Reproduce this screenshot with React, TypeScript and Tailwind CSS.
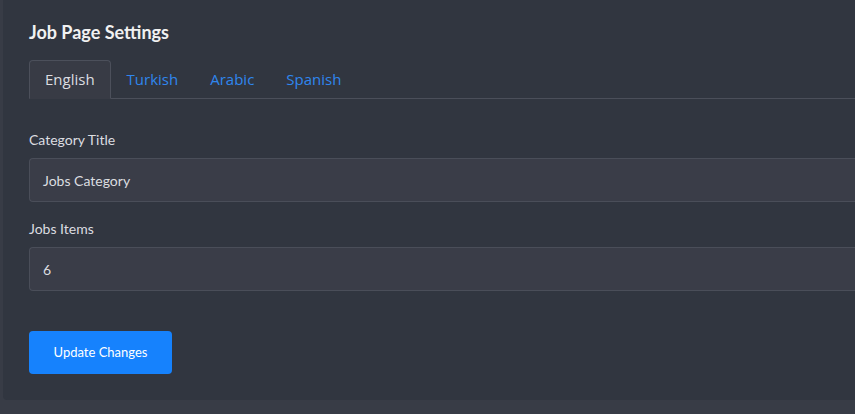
export default function App() {
  const tabs = ["English", "Turkish", "Arabic", "Spanish"];
  return (
    <div className="w-[855px] h-[414px] overflow-hidden bg-[#383c46] pl-[3px]" style={{ fontFamily: "Lato, 'Open Sans', sans-serif" }}>
      <div className="h-[400px] bg-[#313640] rounded-bl-[4px] pl-[26px] pt-[20px]">
        <h1 className="text-[18px] font-bold text-[#f1f1f1] leading-[24px]">Job Page Settings</h1>
        <div className="mt-[16px] flex border-b border-[#4b4f5a]">
          {tabs.map((t, i) => (
            <div
              key={t}
              className={
                i === 0
                  ? "h-[39px] -mb-px px-[15px] flex items-center border border-[#4c505b] border-b-[#383b45] rounded-t-[4px] bg-[#383b45] text-[#dcdde0] text-[15px]"
                  : "h-[39px] -mb-px px-[15px] flex items-center border border-transparent text-[#2f86ee] text-[15px]"
              }
              style={{ fontFamily: "'Open Sans', Inter, sans-serif" }}
            >
              {t}
            </div>
          ))}
        </div>
        <div className="mt-[30px] text-[14px] text-[#dcdde0] leading-[22px]">Category Title</div>
        <div className="mt-[7px] h-[44px] rounded-l-[4px] border border-r-0 border-[#4a4e59] bg-[#3a3d48] flex items-center pl-[13px] text-[14px] text-[#dcdde0]">
          Jobs Category
        </div>
        <div className="mt-[16px] text-[14px] text-[#dcdde0] leading-[22px]">Jobs Items</div>
        <div className="mt-[7px] h-[44px] rounded-l-[4px] border border-r-0 border-[#4a4e59] bg-[#3a3d48] flex items-center pl-[13px] text-[14px] text-[#dcdde0]">
          6
        </div>
        <button className="mt-[40px] w-[143px] h-[43px] rounded-[4px] bg-[#1682fd] text-white text-[13px] flex items-center justify-center">
          Update Changes
        </button>
      </div>
    </div>
  );
}
